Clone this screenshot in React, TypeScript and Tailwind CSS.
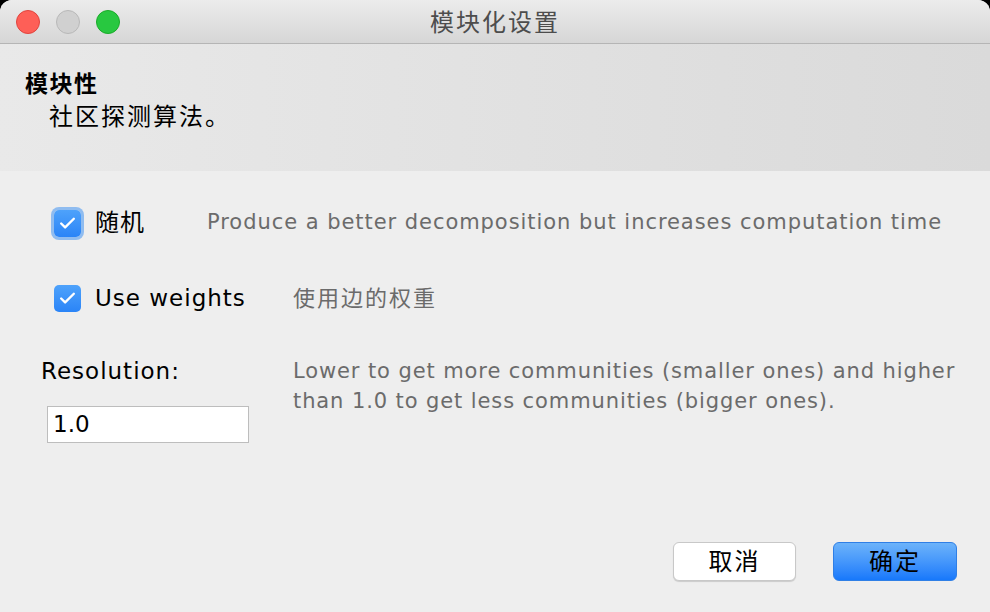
import { Check } from "lucide-react";

const FONT = "font-['DejaVu_Sans','Noto_Sans_CJK_SC',sans-serif]";

function Box({ focused }: { focused?: boolean }) {
  return (
    <span
      className={
        "flex h-[27px] w-[27px] items-center justify-center rounded-[5px] bg-gradient-to-b from-[#4ea2fb] to-[#2a84f7] " +
        (focused ? "ring-[3px] ring-[#8fbcf0]" : "")
      }
    >
      <Check className="h-[19px] w-[19px] text-white" strokeWidth={3} />
    </span>
  );
}

export default function App() {
  return (
    <div className={`h-[612px] w-[990px] overflow-hidden bg-black ${FONT}`}>
      <div className="flex h-full flex-col overflow-hidden rounded-t-[12px] bg-[#eeeeee]">
        {/* title bar */}
        <div className="relative flex h-[44px] flex-none items-center border-b border-[#b5b5b5] bg-gradient-to-b from-[#ececec] to-[#d6d6d6]">
          <div className="flex items-center gap-[16px] pl-[16px]">
            <span className="h-[24px] w-[24px] rounded-full border border-[#e0443e] bg-[#fe5f57]" />
            <span className="h-[24px] w-[24px] rounded-full border border-[#b8b8b8] bg-[#d0d0d0]" />
            <span className="h-[24px] w-[24px] rounded-full border border-[#1aab29] bg-[#28c840]" />
          </div>
          <div className="absolute inset-0 flex items-center justify-center pt-[2px] text-[24px] tracking-[2px] text-[#4d4d4d]">
            模块化设置
          </div>
        </div>

        {/* header */}
        <div className="flex h-[127px] flex-none flex-col bg-gradient-to-r from-[#e9e9e9] to-[#dadada] pl-[25px] pt-[25px]">
          <div className="text-[23px] font-bold leading-[30px] tracking-[1.5px] text-black">模块性</div>
          <div className="pl-[24px] text-[24px] leading-[36px] tracking-[2px] text-black">社区探测算法。</div>
        </div>

        {/* body */}
        <div className="flex flex-1 flex-col">
          <div className="flex items-center pt-[34px]">
            <div className="flex w-[207px] items-center pl-[54px]">
              <Box focused />
              <span className="pl-[14px] text-[24px] tracking-[1px] text-black">随机</span>
            </div>
            <span className="text-[21px] tracking-[0.95px] text-[#6b6b6b]">
              Produce a better decomposition but increases computation time
            </span>
          </div>

          <div className="flex items-center pt-[40px]">
            <div className="flex w-[293px] items-center pl-[54px]">
              <Box />
              <span className="pl-[14px] text-[23px] tracking-[1px] text-black">Use weights</span>
            </div>
            <span className="text-[22px] tracking-[2px] text-[#6b6b6b]">使用边的权重</span>
          </div>

          <div className="flex pt-[40px]">
            <div className="flex w-[293px] flex-col pl-[41px]">
              <span className="text-[23px] leading-[30px] tracking-[1px] text-black">Resolution:</span>
              <div className="ml-[6px] mt-[20px] flex h-[37px] w-[202px] items-center border border-[#bdbdbd] bg-white pl-[5px] text-[23px] text-black">
                1.0
              </div>
            </div>
            <p className="w-[690px] text-[21px] leading-[30px] tracking-[0.9px] text-[#6b6b6b]">
              Lower to get more communities (smaller ones) and higher
              <br />
              than 1.0 to get less communities (bigger ones).
            </p>
          </div>

          <div className="mt-auto flex justify-end gap-[37px] pb-[31px] pr-[33px]">
            <button className="h-[39px] w-[123px] rounded-[6px] border border-[#c8c8c8] bg-white text-[24px] tracking-[2px] text-black shadow-[0_1px_1px_rgba(0,0,0,0.15)]">
              取消
            </button>
            <button className="h-[39px] w-[124px] rounded-[6px] border border-[#2f7fe6] bg-gradient-to-b from-[#6cb3fa] to-[#1678fb] text-[24px] tracking-[2px] text-black">
              确定
            </button>
          </div>
        </div>
      </div>
    </div>
  );
}
